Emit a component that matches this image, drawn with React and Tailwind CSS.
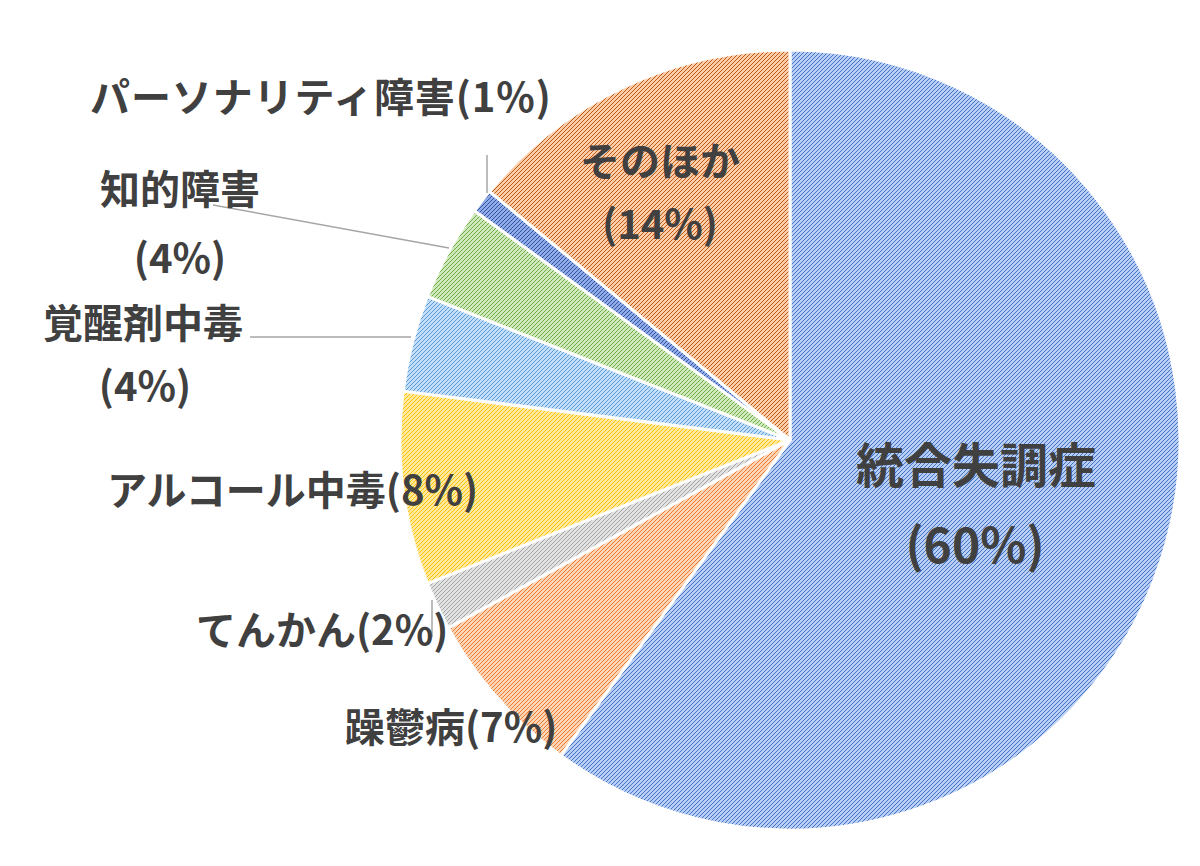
const CX = 790;
const CY = 440;
const R = 390;

const slices = [
  { id: 'schizo', pct: 60, bg: '#b9cef5', line: '#4472c4' },
  { id: 'manic', pct: 7, bg: '#fed4b6', line: '#ed7d31' },
  { id: 'epilepsy', pct: 2, bg: '#e2e2e2', line: '#a5a5a5' },
  { id: 'alcohol', pct: 8, bg: '#ffe99c', line: '#ffc000' },
  { id: 'stimulant', pct: 4, bg: '#c3def8', line: '#5b9bd5' },
  { id: 'intellect', pct: 4, bg: '#cfe9bc', line: '#70ad47' },
  { id: 'personality', pct: 1, bg: '#90aaec', line: '#2f5597' },
  { id: 'other', pct: 14, bg: '#fccdab', line: '#c55a11' },
];

function point(deg) {
  const rad = (deg * Math.PI) / 180;
  return [CX + R * Math.sin(rad), CY - R * Math.cos(rad)];
}

function arcPath(start, end) {
  const [x1, y1] = point(start);
  const [x2, y2] = point(end);
  const large = end - start > 180 ? 1 : 0;
  return `M ${CX} ${CY} L ${x1} ${y1} A ${R} ${R} 0 ${large} 1 ${x2} ${y2} Z`;
}

const labelStyle = {
  fontFamily: '"Noto Sans CJK JP", "Noto Sans", sans-serif',
  fontWeight: 700,
  fill: '#404040',
};

function Label({ x, y, size = 40, anchor = 'start', spacing = 0, children }) {
  return (
    <text
      x={x}
      y={y}
      fontSize={size}
      textAnchor={anchor}
      letterSpacing={spacing}
      style={labelStyle}
    >
      {children}
    </text>
  );
}

export default function App() {
  let acc = 0;
  const paths = slices.map((s) => {
    const start = (acc / 100) * 360;
    acc += s.pct;
    const end = (acc / 100) * 360;
    return { ...s, d: arcPath(start, end) };
  });

  return (
    <div className="w-[1200px] h-[866px] bg-white overflow-hidden">
      <svg width="1200" height="866" viewBox="0 0 1200 866" className="block">
        <defs>
          {/* pixel staircase hatch, like Excel's upward diagonal pattern */}
          {slices.map((s) => (
            <pattern
              key={s.id}
              id={`hatch-${s.id}`}
              width="4"
              height="4"
              patternUnits="userSpaceOnUse"
            >
              <rect width="4" height="4" fill={s.bg} />
              <g fill={s.line} shapeRendering="crispEdges">
                <rect x="0" y="3" width="1" height="1" />
                <rect x="1" y="2" width="1" height="1" />
                <rect x="2" y="1" width="1" height="1" />
                <rect x="3" y="0" width="1" height="1" />
              </g>
            </pattern>
          ))}
        </defs>

        {/* slices */}
        {paths.map((p) => (
          <path
            key={p.id}
            d={p.d}
            fill={`url(#hatch-${p.id})`}
            stroke="#ffffff"
            strokeWidth="3"
            strokeLinejoin="round"
          />
        ))}

        {/* leader lines */}
        <g stroke="#a6a6a6" strokeWidth="1.5">
          <line x1="487" y1="155" x2="487" y2="193" />
          <line x1="213" y1="205" x2="449" y2="248" />
          <line x1="250" y1="337" x2="411" y2="337" />
          <line x1="432" y1="600" x2="432" y2="637" />
        </g>

        {/* labels */}
        <Label x={90} y={112} spacing={0.9}>パーソナリティ障害(1%)</Label>
        <Label x={660} y={176} anchor="middle">そのほか</Label>
        <Label x={660} y={239} anchor="middle">(14%)</Label>
        <Label x={100} y={204}>知的障害</Label>
        <Label x={180} y={273} anchor="middle">(4%)</Label>
        <Label x={43} y={338}>覚醒剤中毒</Label>
        <Label x={145} y={401} anchor="middle">(4%)</Label>
        <Label x={107} y={505}>アルコール中毒(8%)</Label>
        <Label x={196} y={645}>てんかん(2%)</Label>
        <Label x={345} y={742}>躁鬱病(7%)</Label>
        <Label x={976} y={483} size={48} anchor="middle">統合失調症</Label>
        <Label x={975} y={563} size={48} anchor="middle">(60%)</Label>
      </svg>
    </div>
  );
}
